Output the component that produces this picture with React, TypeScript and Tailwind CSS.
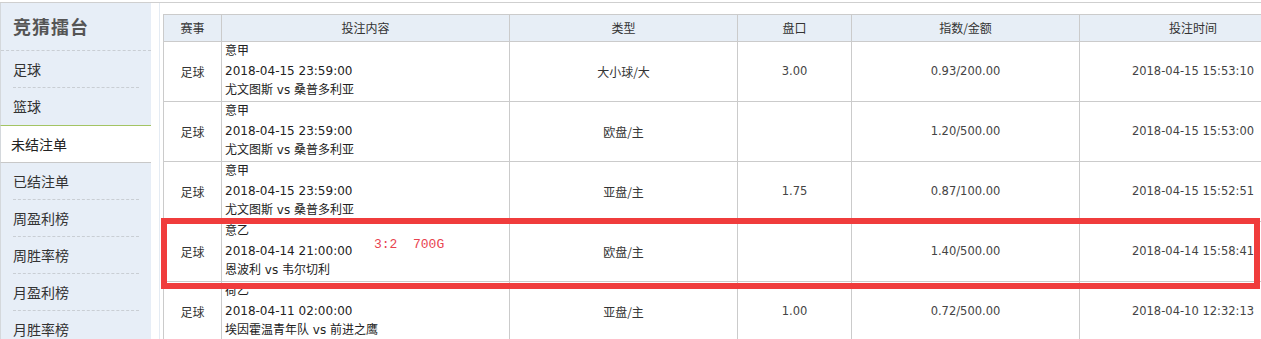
import React from "react";

const navItems = ["足球", "篮球", "未结注单", "已结注单", "周盈利榜", "周胜率榜", "月盈利榜", "月胜率榜"];

interface Bet {
  sport: string;
  league: string;
  date: string;
  teams: string;
  kind: string;
  line: string;
  odds: string;
  time: string;
  note?: string;
}

const bets: Bet[] = [
  { sport: "足球", league: "意甲", date: "2018-04-15 23:59:00", teams: "尤文图斯 vs 桑普多利亚", kind: "大小球/大", line: "3.00", odds: "0.93/200.00", time: "2018-04-15 15:53:10" },
  { sport: "足球", league: "意甲", date: "2018-04-15 23:59:00", teams: "尤文图斯 vs 桑普多利亚", kind: "欧盘/主", line: "", odds: "1.20/500.00", time: "2018-04-15 15:53:00" },
  { sport: "足球", league: "意甲", date: "2018-04-15 23:59:00", teams: "尤文图斯 vs 桑普多利亚", kind: "亚盘/主", line: "1.75", odds: "0.87/100.00", time: "2018-04-15 15:52:51" },
  { sport: "足球", league: "意乙", date: "2018-04-14 21:00:00", teams: "恩波利 vs 韦尔切利", kind: "欧盘/主", line: "", odds: "1.40/500.00", time: "2018-04-14 15:58:41", note: "3:2  700G" },
  { sport: "足球", league: "荷乙", date: "2018-04-11 02:00:00", teams: "埃因霍温青年队 vs 前进之鹰", kind: "亚盘/主", line: "1.00", odds: "0.72/500.00", time: "2018-04-10 12:32:13" },
];

const cjk = "font-['Noto_Sans_CJK_SC',sans-serif]";
const num = "font-['DejaVu_Sans','Noto_Sans_CJK_SC',sans-serif] text-[11.5px] text-[#444]";

function Sidebar() {
  return (
    <div className={`w-[151px] shrink-0 bg-[#e7eef7] border-l border-[#d4d8dc] ${cjk}`}>
      <div className="h-[48px] flex items-center pl-[12px] border-b border-dashed border-[#c9ced4]">
        <span className="text-[18px] font-bold text-[#555] tracking-[1px]">竞猜擂台</span>
      </div>
      {navItems.map((item, i) => {
        const active = item === "未结注单";
        const beforeActive = navItems[i + 1] === "未结注单";
        if (active) {
          return (
            <div
              key={item}
              className="h-[38px] flex items-center pl-[10px] bg-white border-t border-t-[#a3c463] border-b border-b-[#c8c8c8] text-[14px] text-[#222] -ml-px border-l border-l-[#d4d8dc]"
            >
              {item}
            </div>
          );
        }
        return (
          <div key={item} className="px-[12px]">
            <div
              className={`flex items-center text-[14px] text-[#333] ${
                beforeActive ? "h-[37px]" : "h-[37px] border-b border-dashed border-[#c9ced4]"
              }`}
            >
              {item}
            </div>
          </div>
        );
      })}
    </div>
  );
}

function BetTable() {
  const th = "h-[27px] border border-[#cbcbcb] bg-[#e7eef6] text-[12px] font-normal text-[#333] text-center";
  const td = "h-[60px] border border-[#cbcbcb] text-center align-middle";
  return (
    <table className={`table-fixed border-collapse w-[1143px] ${cjk}`}>
      <colgroup>
        <col className="w-[58px]" />
        <col className="w-[288px]" />
        <col className="w-[228px]" />
        <col className="w-[114px]" />
        <col className="w-[228px]" />
        <col className="w-[227px]" />
      </colgroup>
      <thead>
        <tr>
          <th className={th}>赛事</th>
          <th className={th}>投注内容</th>
          <th className={th}>类型</th>
          <th className={th}>盘口</th>
          <th className={th}>指数/金额</th>
          <th className={th}>投注时间</th>
        </tr>
      </thead>
      <tbody>
        {bets.map((b, i) => (
          <tr key={i}>
            <td className={`${td} text-[12px] text-[#333]`}>{b.sport}</td>
            <td className={`${td} !text-left pl-[3px] relative`}>
              <div className="font-['DejaVu_Sans','Noto_Sans_CJK_SC',sans-serif] text-[12px] leading-[19.5px] text-[#222]">
                <div>{b.league}</div>
                <div>{b.date}</div>
                <div>{b.teams}</div>
              </div>
              {b.note && (
                <span className="absolute left-[152px] top-[15px] whitespace-pre font-['Liberation_Mono',monospace] text-[13px] leading-[16px] text-[#e8434f]">
                  {b.note}
                </span>
              )}
            </td>
            <td className={`${td} text-[12px] text-[#333]`}>{b.kind}</td>
            <td className={`${td} ${num}`}>{b.line}</td>
            <td className={`${td} ${num}`}>{b.odds}</td>
            <td className={`${td} ${num}`}>{b.time}</td>
          </tr>
        ))}
      </tbody>
    </table>
  );
}

export default function App() {
  return (
    <div className="relative w-[1261px] h-[339px] overflow-hidden bg-white pt-[2px]">
      <div className="flex border-t border-[#cfcfcf] h-full">
        <Sidebar />
        <div className="ml-[8px] border-l border-[#e4ebf3] pl-[3px] pt-[11px] flex-1 min-w-0">
          <BetTable />
        </div>
      </div>
      <div className="absolute left-[161px] top-[218px] w-[1099px] h-[71px] border-[6px] border-[#f03c3c] pointer-events-none" />
    </div>
  );
}
